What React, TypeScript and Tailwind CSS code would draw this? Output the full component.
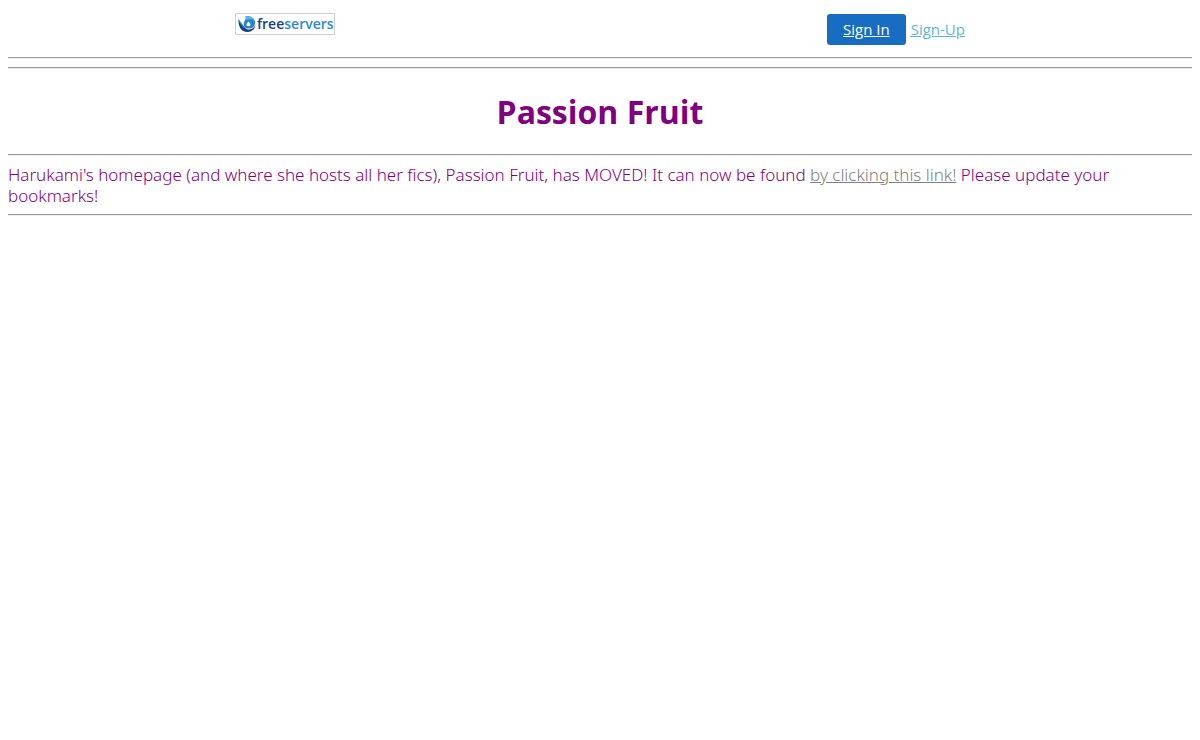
function Rule() {
  return <hr className="my-2 h-0.5 border-0 border-t border-b border-t-[#9a9a9a] border-b-[#eeeeee]" />;
}

function Logo() {
  return (
    <a
      href="#"
      aria-label="freeservers"
      className="flex h-[22px] w-[100px] items-center gap-px border border-[#cfd2d6] bg-white pl-0.5"
    >
      <svg viewBox="0 0 18 18" className="size-[18px] shrink-0" aria-hidden="true">
        <path d="M0.500 4C0 11 3 17 9.500 17C14 17 17 14 17.500 10C15 14 12 15.500 8.500 14C5 12.500 2 9 0.500 4Z" fill="#173f82" />
        <path d="M0.500 4C1.500 9 4.500 13 9 14.200C5.500 11.500 3.500 8 0.500 4Z" fill="#2a78bd" />
        <path d="M7.500 1C12.500 0.500 16.500 3 17 7C17.400 11 14.500 13.500 11 13.500C7.500 13.500 5.500 11.500 5.800 8.500C6.200 5.500 8.500 4.500 7.500 1Z" fill="#2583ce" />
        <path d="M7.500 1C12.500 0.500 15.500 2.500 16.500 5.500C13.500 3.500 10.500 4 8.200 5.500C8.400 4 8.200 2.500 7.500 1Z" fill="#58b4e8" />
        <path d="M10.500 6.500C11.500 7.500 12.500 8.200 12.500 9.500C12.500 10.700 11.700 11.300 10.500 11.300C9.300 11.300 8.500 10.500 8.500 9.500C8.500 8.200 9.800 7.800 10.500 6.500Z" fill="#ffffff" />
      </svg>
      <span className="text-[14px] leading-5 font-semibold text-[#19407f]">
        free<span className="text-[#3188ca]">servers</span>
      </span>
    </a>
  );
}

export default function App() {
  return (
    <div className="flow-root bg-white px-2 font-['Open_Sans','Noto_Sans',sans-serif] text-[17px] leading-[21px] text-[#800080]">
      <header className="mt-2 grid min-h-[41px] grid-cols-2 items-start">
        <div className="flex justify-center pt-[5px] pr-[38px]">
          <Logo />
        </div>
        <div className="flex items-center justify-center gap-[5px] pt-1.5 text-[15px] leading-[21px] underline">
          <a href="#" className="rounded-[3px] bg-[#176dc2] px-4 py-[5px] text-white">
            Sign In
          </a>
          <a href="#" className="text-[#5bb8d4]">
            Sign-Up
          </a>
        </div>
      </header>

      <Rule />
      <Rule />
      <h1 className="my-[21px] text-center text-[32px] leading-[43px] font-bold">Passion Fruit</h1>
      <Rule />
      <p className="font-['Noto_Sans',sans-serif] font-light">
        Harukami's homepage (and where she hosts all her fics), Passion Fruit, has MOVED! It can now be found{" "}
        <a href="#" className="text-[#808080] underline">
          by clicking this link!
        </a>{" "}
        Please update your bookmarks!
      </p>
      <Rule />
    </div>
  );
}
